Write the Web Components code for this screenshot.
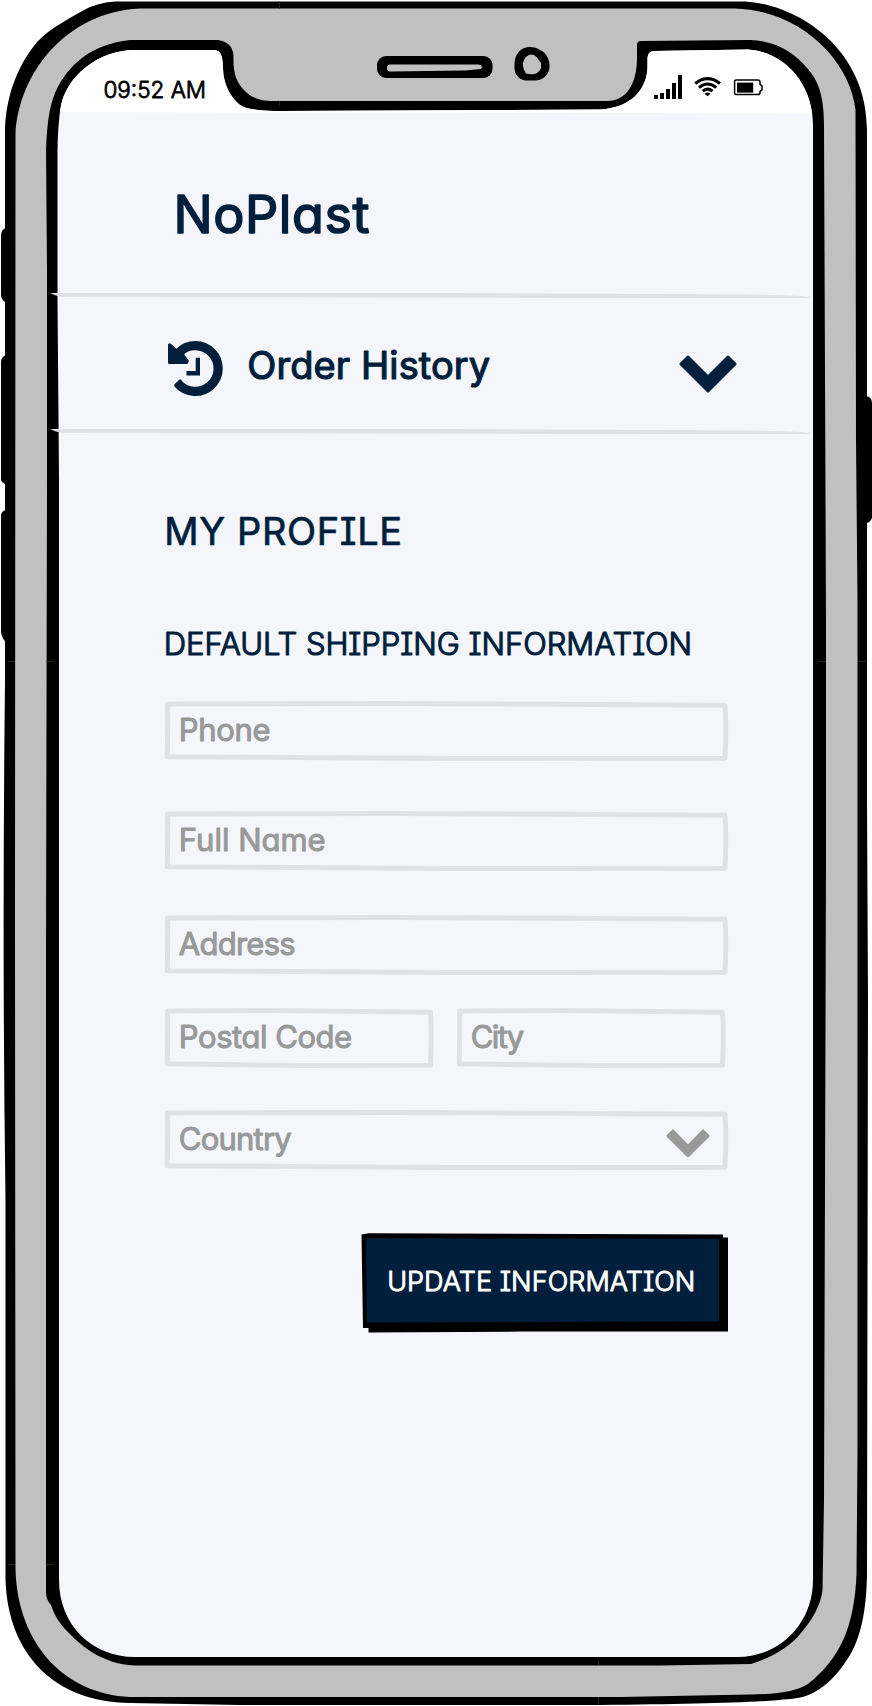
<!DOCTYPE html>
<html lang="en">
<head>
<meta charset="utf-8">
<title>NoPlast</title>
<style>
body{margin:0;background:#fff;font-family:Inter,"Liberation Sans",sans-serif}
</style>
</head>
<body>
<phone-frame>
  <status-bar></status-bar>
  <brand-header></brand-header>
  <sketch-rule></sketch-rule>
  <menu-row></menu-row>
  <sketch-rule></sketch-rule>
  <profile-form></profile-form>
</phone-frame>
<script>
function define(name, html, ready) {
  const t = document.createElement('template');
  t.innerHTML = html;
  customElements.define(name, class extends HTMLElement {
    connectedCallback() {
      if (this.shadowRoot) return;
      this.attachShadow({mode: 'open'}).appendChild(t.content.cloneNode(true));
      if (ready) ready.call(this, this.shadowRoot);
    }
  });
}

/* Lettering with round stroke ends, spread over the width given by "fit". */
define('sketch-text', `
<style>
:host{display:block;flex:none}
svg{display:block;overflow:visible}
text{font-family:Inter,"Liberation Sans",sans-serif;font-feature-settings:"cv11" 1,"cv08" 1;fill:currentColor;stroke:currentColor;stroke-linejoin:round;stroke-linecap:round}
</style><svg><text></text></svg>`, function (root) {
  const size = +this.getAttribute('size'), fit = +this.getAttribute('fit');
  const svg = root.querySelector('svg'), text = root.querySelector('text');
  svg.setAttribute('width', fit);
  svg.setAttribute('height', size);
  text.textContent = this.getAttribute('label');
  text.setAttribute('x', -size * 0.07);
  text.setAttribute('y', size * 0.8636);
  text.style.fontSize = size + 'px';
  text.style.fontWeight = this.getAttribute('weight') || 400;
  text.style.strokeWidth = this.getAttribute('ink') || 1;
  text.setAttribute('textLength', fit + size * 0.14);
});

define('sketch-rule', `
<style>:host{display:block;height:6px;margin:0 59px 0 50px}svg{display:block}</style>
<svg width="763" height="6"><path d="M0 1L12 1 400 1 700 2.500Q750 3 760 5L759 6.500 650 6 300 5.500 14 5 6 3.500Z" fill="#dee1e5"/></svg>`);

define('chevron-icon', `
<style>:host{display:block;flex:none;width:58px}svg{display:block;width:100%;height:auto}</style>
<svg viewBox="0 0 58 38"><path d="M9 2 29 22 49 2 56 9 29 36 2 9Z" fill="currentColor" stroke="currentColor" stroke-width="3" stroke-linejoin="round"/></svg>`);

define('history-icon', `
<style>:host{display:block;flex:none}svg{display:block}</style>
<svg width="56" height="56" viewBox="168 340.500 56 56" fill="none" stroke="#001f3d">
<path d="M179.100 351.800A22.900 22.900 0 1 1 177.900 383" stroke-width="9.200"/>
<path d="M180.100 380.300 175.600 384.800" stroke-width="2.800" stroke-linecap="round"/>
<path d="M169.300 344.300 170 344.300 177 350.500 183 352.500 183.300 355 187.500 360.500 186.800 362.200 169.300 362.200Z" fill="#001f3d" stroke-width="2.600" stroke-linejoin="round"/>
<path d="M195.700 357.200H200V374.900H186.500V370.600H195.700Z" fill="#001f3d" stroke="none"/>
</svg>`);

define('status-bar', `
<style>
:host{display:flex;box-sizing:border-box;height:112px;padding:75px 109px 0 105px;justify-content:space-between;color:#000}
sketch-text{margin-top:4px}
svg{display:block}
</style>
<sketch-text label="09:52 AM" size="22.5" fit="99.5" weight="300" ink="0.8"></sketch-text>
<svg width="110" height="26" viewBox="653 74.700 110 26">
<path d="M654 94.700h4v4h-4zM660 92.700h4v6h-4zM666 88.700h4v10h-4zM672 82.700h4v16h-4zM678 74.700h4v24h-4z"/>
<g fill="none" stroke="#000" stroke-width="3"><path d="M695.300 83.200Q707.500 73.500 720 83.200M699 87.300Q707.500 80 716.300 87.300M702.700 90.900Q707.500 86.700 712.600 90.900"/></g>
<path d="M704.500 93.500Q707.500 91 710.600 93.500L707.600 96Z"/>
<path d="M736 79.800H758Q760 79.800 760 82V84L762 85.500V89.500L760 91V92.500Q760 94.300 758 94.300H736Q734.600 94.300 734.600 92.500V81.500Q734.600 79.800 736 79.800Z" fill="#fff" stroke="#000" stroke-width="1.500"/>
<path d="M737 82.300h16.200v10H737z"/>
</svg>`);

define('brand-header', `
<style>:host{display:flex;box-sizing:border-box;height:180px;padding:75.500px 0 0 177px;color:#001f3d}</style>
<sketch-text label="NoPlast" size="52" fit="189" ink="1.6"></sketch-text>`);

define('menu-row', `
<style>
:host{display:flex;box-sizing:border-box;height:130px;padding:0 135.500px 0 168px;align-items:center;color:#001f3d}
history-icon{margin-top:11px}
sketch-text{margin:4px auto 0 26px}
chevron-icon{margin-top:21px}
</style>
<history-icon></history-icon>
<sketch-text label="Order History" size="38" fit="237.5" ink="1.2"></sketch-text>
<chevron-icon></chevron-icon>`);

/* Input outline drawn by hand: sides lean a pixel or two. */
define('sketch-field', `
<style>
:host{display:grid;height:60px;color:#999}
svg,.row{grid-area:1/1}
svg{display:block;width:100%;height:60px;overflow:visible}
.row{display:flex;justify-content:space-between;align-items:center;padding:0 18px 4px 16px}
slot{display:block}
</style>
<svg><path fill="none" stroke="#dee1e5" stroke-width="5" stroke-linejoin="round"/></svg>
<div class="row"><slot></slot></div>`, function (root) {
  const w = +this.getAttribute('width');
  root.querySelector('path').setAttribute('d',
    `M2.600 2.900 L${w * .4} 2.400 L${w - 3.500} 4.200 Q${w - 2} 25 ${w - 3.500} 57.200 L${w * .5} 57.600 L2.200 55.800 Q3 25 2.600 2.900Z`);
  const text = document.createElement('sketch-text');
  text.setAttribute('label', this.getAttribute('label'));
  text.setAttribute('fit', this.getAttribute('fit'));
  text.setAttribute('size', 31);
  text.setAttribute('ink', 1);
  root.querySelector('.row').prepend(text);
});

define('sketch-button', `
<style>
:host{display:grid;width:368px;height:100px;color:#fff}
svg,.label{grid-area:1/1}
.label{display:flex;align-items:center;padding:0 0 4px 28px}
</style>
<svg width="368" height="100"><path d="M.5 1.500 8 .3 362 1.500V4.500H367V98.500L160 98.600 7.500 99.500V95H2Z" fill="#000"/><path d="M5 5 358 6V88.300L6 89.500Z" fill="#001f3d"/></svg>
<div class="label"><sketch-text label="UPDATE INFORMATION" size="27" fit="304.5" weight="300" ink="1"></sketch-text></div>`);

define('profile-form', `
<style>
:host{display:flex;flex-direction:column;align-items:flex-start;padding:78px 144px 0 164.500px;color:#001f3d}
.title{margin:0 0 50.500px 2.500px}
.sub{margin:27px 0 42.500px 1.500px}
sketch-field{width:563.500px}
.pair{display:flex;gap:23px;margin:33px 0 42px}
.pair sketch-field{width:269px}
chevron-icon{width:44px;margin-top:10px}
sketch-button{margin:63px 0 0 196px}
</style>
<sketch-text class="title" label="MY PROFILE" size="38" fit="232.5" ink="0.7"></sketch-text>
<sketch-text class="sub" label="DEFAULT SHIPPING INFORMATION" size="31" fit="524" weight="300" ink="1.2"></sketch-text>
<sketch-field label="Phone" fit="87.5" width="563.5"></sketch-field>
<sketch-field label="Full Name" fit="142.5" width="563.5" style="margin:50px 0 44px"></sketch-field>
<sketch-field label="Address" fit="112.5" width="563.5"></sketch-field>
<div class="pair">
<sketch-field label="Postal Code" fit="169" width="269"></sketch-field>
<sketch-field label="City" fit="49" width="269"></sketch-field>
</div>
<sketch-field label="Country" fit="108.5" width="563.5"><chevron-icon></chevron-icon></sketch-field>
<sketch-button></sketch-button>`);

define('phone-frame', `
<style>
:host{display:grid;width:872px;height:1706px;overflow:hidden}
svg,.screen{grid-area:1/1;min-width:0}
.screen{display:flex;flex-direction:column}
</style>
<svg width="872" height="1706" viewBox="0 0 872 1706">
<defs><clipPath id="glass"><path d="M57.500 300V150C58 125 60 110 61 106C66 78 97 50 135 50H213C221 50 222.500 55 223 68C223 84 231 98 240 105C247 110 265 111 282 111L600 109.500C632 108 648 88 647.500 65V58Q648 51 654 51L748 49.500C786 52 813 85 813 125V1580C813 1625 778 1657 738 1657H135C92 1657 59 1625 59 1580V480Z"/></clipPath></defs>
<g>
<path d="M6 228Q1 229 1 236V295Q2 302 6 302ZM6 355Q1 357 1 362V480Q2 483 6 484ZM6 510Q1 511 1 516V632Q2 639 6 642ZM858 396H866Q872 397 872 403V518Q870 523 866 523H858Z"/>
<path d="M115 1.500H745C800 5 867 50 867 130V800L868 1000 867 1570C867 1605 862 1635 850 1655C835 1680 815 1698 790 1699C750 1703 690 1704 600 1705H240L130 1703C55 1702 8 1655 5.500 1580V1200Q2 950 5 680V130C6 95 18 65 37 42C50 28 72 17 84 10Q96 3 115 1.500Z"/>
<path d="M140 8.500H735C800 10 850 60 855.500 110L856 440 857.500 600V1450L856.500 1575C854 1625 842 1657 808 1684C797 1691 780 1694 750 1694.500L620 1697H130C65 1694 18 1645 15.500 1570L15 920 15.500 135C18 75 65 12 140 8.500Z" fill="#c0c0c0"/>
<path d="M46 150C47 125 49 108 55 93C68 64 92 44 130 40H218Q232 42 233.500 55C233 73 236 82 245 91C254 100 264 101 276 101H607C630 101 637 78 637 58V45Q637 41 641 41L750 40C778 41 795 54 807 68C818 80 824 95 824 125L826 620V870L824 1500 822.500 1590C821 1605 812 1620 801 1633C789 1648 770 1658 751 1664L660 1665.500H135C101 1664 80 1645 65 1629C55 1618 53 1610 51 1605Q46 1600 46 1592V950L47 480V270Z"/>
</g>
<g clip-path="url(#glass)"><rect width="872" height="1706" fill="#f4f6fc"/><path d="M0 0H872V114L600 113 300 112.500 0 112Z" fill="#fff"/></g>
<rect x="377" y="56" width="115.500" height="22" rx="9"/>
<path d="M390 64.500H478Q484 65 481 69L465 70.500 390 71.500Q387 71 387 69V67Q387 65 390 64.500Z" fill="#c0c0c0"/>
<path d="M514.500 66C514 54 521 47 530 47Q536 47 540 50C547 53 550 60 549.500 68C548 77 540 81 535 80.500H525C518 79 514 74 514.500 66Z"/>
<path d="M531.500 54.500Q536 55 538 59L541 63V68C538 75 532 75 526 73.500Q521 66 524 60Q526 55 531.500 54.500Z" fill="#c0c0c0"/>
<path d="M279.500 1V9M279.500 101V106M8 661.500H15M46 661.500H54M818 661.500H826M858 661.500H866M8 1564.500H15M46 1564.500H54M598.500 1661V1665M598.500 1697V1705" stroke="#333" stroke-width=".7"/>
</svg>
<div class="screen"><slot></slot></div>`);
</script>
</body>
</html>
